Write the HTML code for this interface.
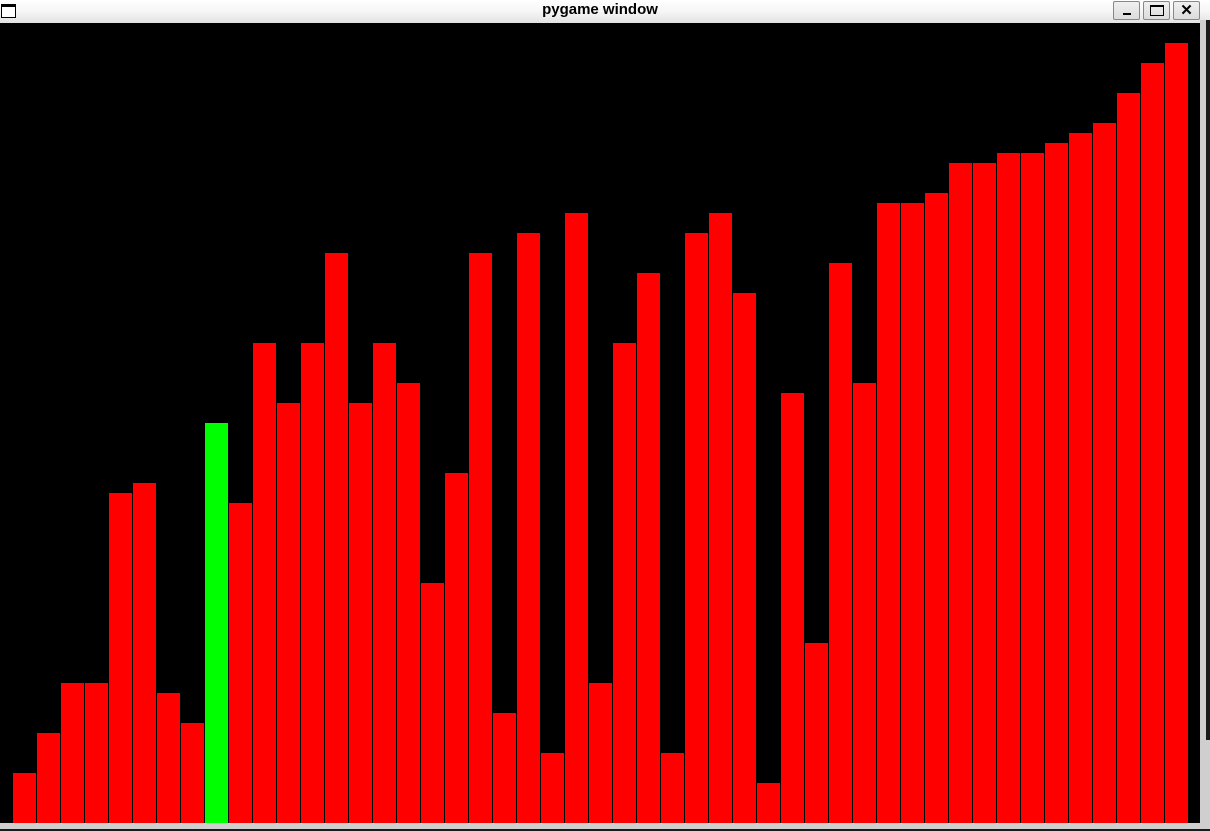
<!DOCTYPE html>
<html><head><meta charset="utf-8"><style>
html,body{margin:0;padding:0;width:1210px;height:831px;overflow:hidden;background:#cfcfcf;position:relative;font-family:"Liberation Sans",sans-serif}
#title{position:absolute;left:0;top:0;width:1210px;height:23px;background:linear-gradient(#fff 0,#f6f6f6 50%,#e2e2e2 100%)}
#title .t{position:absolute;left:0;width:1200px;top:1px;text-align:center;font-size:15px;font-weight:bold;color:#000}
.ico{position:absolute;left:1px;top:4px;width:13px;height:10px;border:1px solid #000;border-top-width:3px;background:#fff}
.btn{position:absolute;top:1px;width:25px;height:17px;border:1px solid #888;background:linear-gradient(#f0f0f0,#dcdcdc);border-radius:2px}
#canvas{position:absolute;left:0;top:23px;width:1200px;height:800px;background:#000}
.b{position:absolute;bottom:0;width:23px;background:#f00;border-left:1px solid #000}
#rb{position:absolute;left:1200px;top:20px;width:6px;height:809px;background:#cfcfcf}
#rd{position:absolute;left:1206px;top:20px;width:4px;height:720px;background:#1a1a1a}
#bd{position:absolute;left:0;top:829px;width:1210px;height:2px;background:#1a1a1a}
</style></head><body>
<div id="title"><div class="ico"></div><div class="t">pygame window</div>
<div class="btn" style="left:1113px"><div style="position:absolute;left:9px;top:11px;width:8px;height:2px;background:#000"></div></div>
<div class="btn" style="left:1143px"><div style="position:absolute;left:6px;top:3px;width:12px;height:8px;border:1px solid #000;border-top-width:2px"></div></div>
<div class="btn" style="left:1173px"><div style="position:absolute;left:0;top:-1px;width:25px;text-align:center;font-size:15px;font-weight:bold">✕</div></div>
</div>
<div id="canvas"></div>
<div id="rb"></div><div id="rd"></div><div id="bd"></div>
<script>
var t=[773,733,683,683,493,483,693,723,423,503,343,403,343,253,403,343,383,583,473,253,713,233,753,213,683,343,273,753,233,213,293,783,393,643,263,383,203,203,193,163,163,153,153,143,133,123,93,63,43];
var c=document.getElementById('canvas'),h='';
for(var i=0;i<t.length;i++){h+='<div class="b" style="left:'+(12+24*i)+'px;height:'+(823-t[i])+'px'+(i==8?';background:#0f0':'')+'"></div>';}
c.innerHTML=h;
</script>
</body></html>
